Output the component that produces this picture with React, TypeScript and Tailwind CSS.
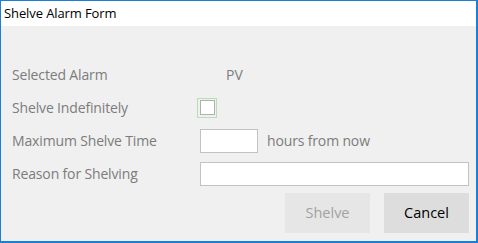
import React from "react"

const font = { fontFamily: '"Open Sans", "Noto Sans", sans-serif' }

function Row({ label, children }: { label: string; children?: React.ReactNode }) {
  return (
    <div className="flex h-[33px] items-center">
      <div className="w-[188px] text-[14px] tracking-[-0.15px] text-[#7c7c7c]">{label}</div>
      <div className="flex flex-1 items-center">{children}</div>
    </div>
  )
}

export default function App() {
  return (
    <div
      className="flex h-[243px] w-[478px] flex-col border-t border-l border-r-2 border-b-2 border-[#1a7fd6] bg-[#f0f0f0]"
      style={font}
    >
      <div className="flex h-[25px] items-center bg-white pl-[3px] text-[13px] tracking-[-0.1px] text-black">
        Shelve Alarm Form
      </div>
      <div className="flex flex-1 flex-col pl-[11px] pr-[7px] pt-[32px]">
        <Row label="Selected Alarm">
          <span className="pl-[26px] text-[14px] text-[#7c7c7c]">PV</span>
        </Row>
        <Row label="Shelve Indefinitely">
          <div className="-ml-[3px] flex h-[20px] w-[20px] items-center justify-center border border-[#b4e0b4]">
            <div className="h-[15px] w-[15px] border border-[#b0b0b0] bg-white" />
          </div>
        </Row>
        <Row label="Maximum Shelve Time">
          <input className="h-[24px] w-[58px] border border-[#c2c2c2] bg-white outline-none" />
          <span className="ml-[9px] text-[14px] tracking-[-0.15px] text-[#7c7c7c]">hours from now</span>
        </Row>
        <Row label="Reason for Shelving">
          <input className="h-[24px] flex-1 border border-[#c2c2c2] bg-white outline-none" />
        </Row>
        <div className="mt-[3px] flex justify-end gap-[14px]">
          <button className="h-[40px] w-[85px] bg-[#e6e6e6] text-[14.5px] text-[#a2a2a2]">Shelve</button>
          <button className="h-[40px] w-[85px] bg-[#dddddd] text-[14.5px] text-black">Cancel</button>
        </div>
      </div>
    </div>
  )
}
